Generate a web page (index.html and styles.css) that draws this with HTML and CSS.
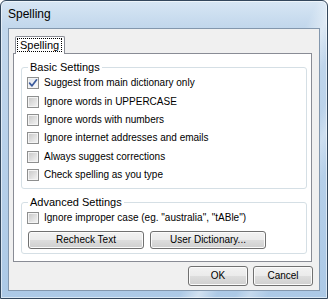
FILE: index.html
```html
<!DOCTYPE html>
<html>
<head>
<meta charset="utf-8">
<link rel="stylesheet" href="styles.css">
</head>
<body>
<div class="window">
  <div class="titlebar">Spelling</div>
  <div class="client">
    <div class="tabstrip">
      <div class="tab"><span class="tab-label">Spelling</span></div>
    </div>
    <div class="panel">
      <div class="group">
        <div class="group-title">Basic Settings</div>
        <div class="opt"><span class="cb checked"><svg width="10" height="10" viewBox="0 0 10 10"><path d="M1.6 5.2 L4 7.8 L8.6 1.8" fill="none" stroke="#3a5a9c" stroke-width="1.7" stroke-linecap="round" stroke-linejoin="round"/></svg></span><span class="opt-text">Suggest from main dictionary only</span></div>
        <div class="opt"><span class="cb"></span><span class="opt-text">Ignore words in UPPERCASE</span></div>
        <div class="opt"><span class="cb"></span><span class="opt-text">Ignore words with numbers</span></div>
        <div class="opt"><span class="cb"></span><span class="opt-text">Ignore internet addresses and emails</span></div>
        <div class="opt"><span class="cb"></span><span class="opt-text">Always suggest corrections</span></div>
        <div class="opt"><span class="cb"></span><span class="opt-text">Check spelling as you type</span></div>
      </div>
      <div class="group group-adv">
        <div class="group-title">Advanced Settings</div>
        <div class="opt"><span class="cb"></span><span class="opt-text">Ignore improper case (eg. "australia", "tABle")</span></div>
        <div class="btn-row">
          <button class="btn btn-wide">Recheck Text</button>
          <button class="btn btn-wide">User Dictionary...</button>
        </div>
      </div>
    </div>
    <div class="footer">
      <button class="btn btn-dlg">OK</button>
      <button class="btn btn-dlg">Cancel</button>
    </div>
  </div>
</div>
</body>
</html>
```
FILE: styles.css
```css
html, body {
  margin: 0;
  padding: 0;
  width: 328px;
  height: 299px;
  overflow: hidden;
  background: #ffffff;
}

body {
  font-family: "Liberation Sans", Arial, sans-serif;
  font-size: 10px;
  color: #000;
}

.window {
  box-sizing: border-box;
  width: 328px;
  height: 299px;
  border: 1px solid #33475c;
  border-radius: 6px 6px 0 0;
  padding: 0 7px 7px 7px;
  display: flex;
  flex-direction: column;
  background:
    linear-gradient(115deg, rgba(255,255,255,0) 68%, rgba(255,255,255,0.45) 72%, rgba(255,255,255,0) 76%, rgba(255,255,255,0) 80%, rgba(255,255,255,0.3) 83%, rgba(255,255,255,0) 87%),
    linear-gradient(180deg, #d7e6f4 0px, #c2d7ec 26px, #b5cfe9 60%, #acc9e6 100%);
  box-shadow: inset 0 0 0 1px rgba(255,255,255,0.55);
}

.titlebar {
  height: 27px;
  box-sizing: border-box;
  padding-top: 6px;
  font-size: 12px;
  line-height: 14px;
  color: #000;
}

.client {
  flex: 1;
  display: flex;
  flex-direction: column;
  border: 1px solid #8397ad;
  background: #f0f0f0;
}

.tabstrip {
  display: flex;
  padding: 7px 0 0 6px;
}

.tab {
  position: relative;
  z-index: 1;
  background: #ffffff;
  border: 1px solid #898c95;
  border-bottom: none;
  border-radius: 2px 2px 0 0;
  padding: 1px 2px 2px 1px;
  margin-bottom: -1px;
}

.tab-label {
  display: block;
  border: 1px dotted #000;
  padding: 0 2px;
  line-height: 12px;
  font-size: 11px;
}

.panel {
  margin: 0 7px 0 4px;
  border: 1px solid #898c95;
  background: #ffffff;
  padding: 13px 4px 7px 7px;
}

.group {
  border: 1px solid #d5dfe5;
  border-radius: 3px;
  padding: 0 0 3.6px 5px;
}

.group-adv {
  margin-top: 13px;
  padding-bottom: 4px;
}

.group-title {
  display: table;
  margin: -7px 0 1px 1px;
  padding: 0 2px;
  line-height: 12px;
  font-size: 11px;
  background: #ffffff;
}

.opt {
  display: flex;
  align-items: center;
  height: 18.4px;
}

.cb {
  box-sizing: border-box;
  width: 12px;
  height: 12px;
  border: 1px solid #8e8f8f;
  box-shadow: inset 0 0 0 1px #f4f4f4;
  background: linear-gradient(135deg, #c6c6c6 0%, #dedede 50%, #f6f6f6 100%);
  display: flex;
  align-items: center;
  justify-content: center;
  flex: none;
}

.cb.checked {
  background: linear-gradient(135deg, #dfe3ea 0%, #f0f2f5 60%, #fafbfc 100%);
}

.opt-text {
  margin-left: 5px;
  line-height: 12px;
  white-space: nowrap;
}

.btn-row {
  display: flex;
  gap: 6px;
  margin-top: 3.6px;
  padding-left: 1px;
}

.btn {
  box-sizing: border-box;
  font-family: "Liberation Sans", Arial, sans-serif;
  font-size: 10px;
  color: #000;
  border: 1px solid #707070;
  border-radius: 3px;
  box-shadow: inset 0 0 0 1px #fbfbfb;
  background: linear-gradient(180deg, #f2f2f2 0%, #ebebeb 48%, #dddddd 52%, #cfcfcf 100%);
  padding: 0;
  margin: 0;
  line-height: 12px;
}

.btn-wide {
  width: 116px;
  height: 18px;
}

.footer {
  display: flex;
  justify-content: flex-end;
  gap: 5px;
  padding: 4px 6px 4px 0;
}

.btn-dlg {
  width: 60px;
  height: 20px;
}
```
